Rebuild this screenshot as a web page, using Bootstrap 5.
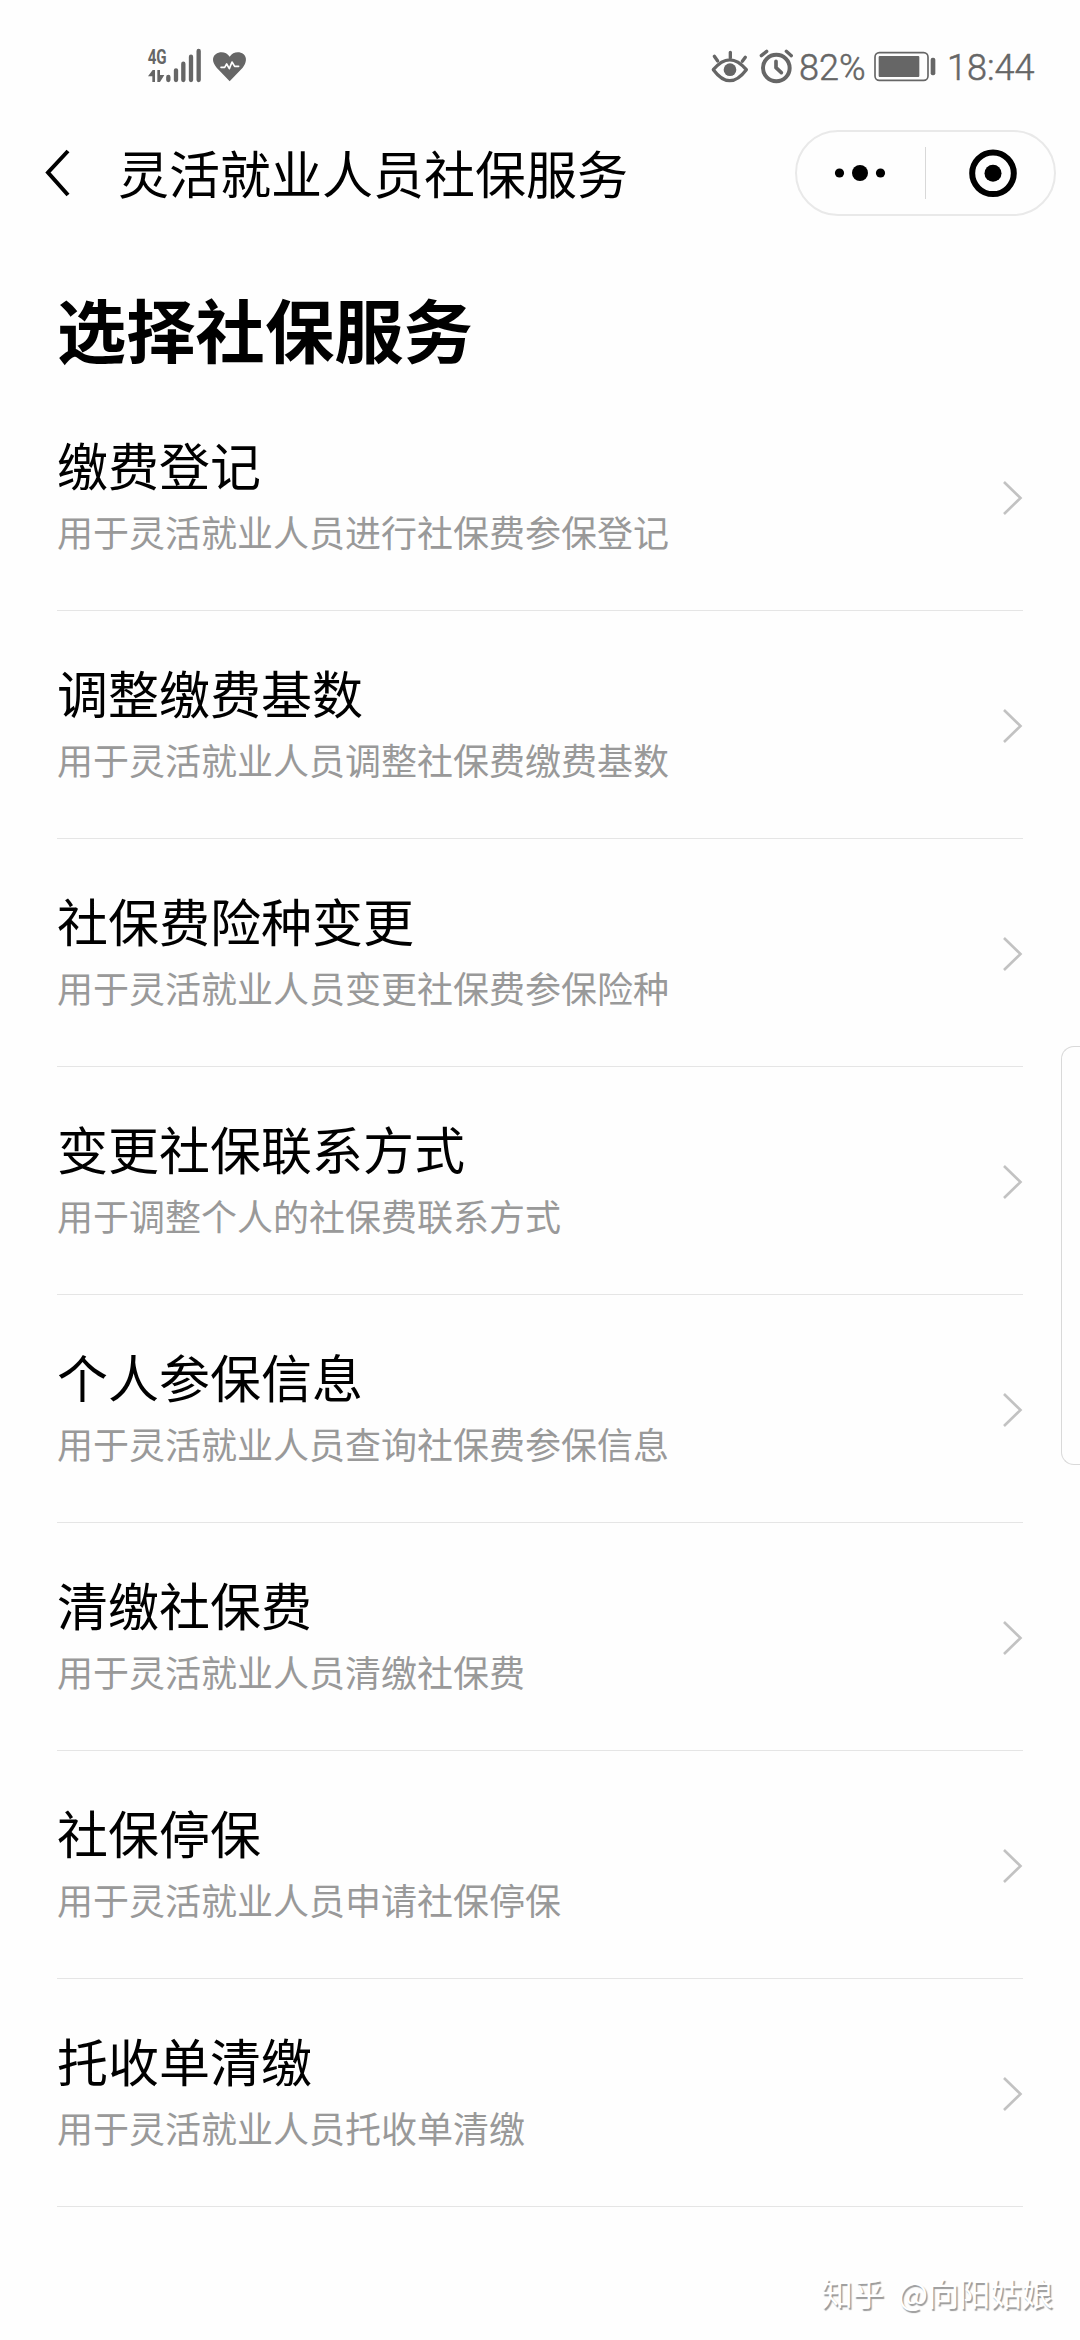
<!DOCTYPE html>
<html lang="zh-CN">
<head>
<meta charset="utf-8">
<meta name="viewport" content="width=device-width, initial-scale=1">
<title>灵活就业人员社保服务</title>
<link href="https://cdn.jsdelivr.net/npm/bootstrap@5.3.0/dist/css/bootstrap.min.css" rel="stylesheet">
<style>
  body { font-family: "Noto Sans CJK SC", sans-serif; background: #fefefe; color: #000; }
  .phone { width: 1080px; height: 2340px; }
  .status-bar { height: 130px; padding: 30px 44px 0 130px; color: #666; font-family: Roboto, sans-serif; font-size: 36px; font-weight: 300; line-height: 76px; }
  .status-bar svg { display: block; }
  .pct, .clock-text { -webkit-text-stroke: .5px #666; }
  .pct { width: 74px; margin-left: 6px; }
  .clock-text { margin-left: 11px; width: 89px; white-space: nowrap; }
  .title-bar { height: 86px; padding: 0 24px 0 42px; }
  .bar-title { font-size: 51px; line-height: 80px; margin: -3px 0 0 44px; }
  .capsule { width: 261px; height: 86px; border: 2px solid #e9e9e9; border-radius: 43px; }
  .services-page { margin: 0 57px; }
  .page-title { font-size: 69.300px; line-height: 100px; margin: 62px 0 5px; }
  .service { height: 228px; border-bottom: 1px solid #e5e5e5; padding-top: 3px; color: #000; }
  .service-text { margin-top: -12px; }
  .service-name { font-size: 51px; line-height: 76px; }
  .service-desc { font-size: 36px; line-height: 54px; color: #999; margin-top: 2px; }
  .side-tab { top: 1046px; width: 19px; height: 419px; border: 1px solid #d9d9d9; border-right: 0; border-radius: 13px 0 0 13px; background: #fefefe; }
  .watermark { right: 27px; bottom: 24px; font-size: 31.300px; line-height: 46px; color: #fff; word-spacing: 7px; text-shadow: 1.5px 1.5px 1px #999; }
</style>
</head>
<body>
<div class="phone position-relative overflow-hidden">
  <header>
    <div class="status-bar d-flex">
      <svg width="140" height="70" viewBox="0 0 420 210" fill="#666" stroke="#666" stroke-linecap="round">
        <text x="53" y="101" font-family="Roboto" font-size="59" font-weight="700" textLength="57" lengthAdjust="spacingAndGlyphs" stroke="none">4G</text>
        <path stroke="none" d="M54 139L68 120H75V156H67V139ZM82 120H90V135H103L90 156H82Z"/>
        <g stroke-width="13" fill="none"><path d="M115 141V150M138 121V150M160 101V150M183 80V150M206 63V150"/></g>
        <path stroke="none" d="M299 154L260 113C246 97 246 81 257 73C271 63 289 66 299 80C309 66 327 63 341 73C351 82 350 99 338 113Z"/>
        <path d="M273 112H284L290 102L298 116L306 96L314 109H326" fill="none" stroke="#fff" stroke-width="5" stroke-linejoin="round"/>
      </svg>
      <div class="d-flex ms-auto">
        <svg width="83" height="70" viewBox="30 0 249 210" fill="none" stroke="#666" stroke-width="10" stroke-linecap="round">
          <path d="M40 119Q89 60 139 119Q89 185 40 119Z" stroke-linejoin="round"/>
          <circle cx="90" cy="119" r="19" fill="#666" stroke="none"/>
          <path d="M91 67V83M43 79L53 93M136 82L127 94"/>
          <circle cx="229" cy="114" r="40" stroke-width="12"/>
          <path d="M228 94V113L244 128" stroke-width="11" stroke-linejoin="round"/>
          <path d="M184 77L200 64M259 64L274 77"/>
        </svg>
        <span class="pct">82%</span>
        <svg width="63" height="70" viewBox="520 0 189 210" fill="#666">
          <rect x="526" y="68" width="159" height="83" rx="13" fill="none" stroke="#666" stroke-width="5"/>
          <rect x="537" y="78" width="122" height="63" rx="3"/>
          <rect x="693" y="83" width="14" height="53" rx="6"/>
        </svg>
        <span class="clock-text">18:44</span>
      </div>
    </div>
    <nav class="title-bar d-flex align-items-center">
      <svg width="32" height="52" viewBox="0 0 32 52" fill="none" stroke="#000" stroke-width="4"><path d="M26 4L6 25.500L26 48"/></svg>
      <span class="bar-title">灵活就业人员社保服务</span>
      <div class="capsule ms-auto">
        <svg class="d-block" width="257" height="82" viewBox="797 132 257 82">
          <circle cx="839.500" cy="173" r="4.600"/><circle cx="860" cy="173" r="8"/><circle cx="880.500" cy="173" r="4.600"/>
          <path d="M925.500 147V199" stroke="#d8d8d8"/>
          <circle cx="993" cy="173.300" r="20.800" fill="none" stroke="#000" stroke-width="6"/><circle cx="993" cy="173.300" r="8.500"/>
        </svg>
      </div>
    </nav>
  </header>
  <main class="services-page">
    <h1 class="page-title fw-bold">选择社保服务</h1>
    <div>
      <a class="service d-flex align-items-center justify-content-between text-decoration-none" href="#"><div class="service-text"><div class="service-name">缴费登记</div><div class="service-desc">用于灵活就业人员进行社保费参保登记</div></div><svg width="22" height="36" viewBox="0 0 22 36" fill="none" stroke="#c2c2c2" stroke-width="2.600"><path d="M3 2L19.500 18L3 34"/></svg></a>
      <a class="service d-flex align-items-center justify-content-between text-decoration-none" href="#"><div class="service-text"><div class="service-name">调整缴费基数</div><div class="service-desc">用于灵活就业人员调整社保费缴费基数</div></div><svg width="22" height="36" viewBox="0 0 22 36" fill="none" stroke="#c2c2c2" stroke-width="2.600"><path d="M3 2L19.500 18L3 34"/></svg></a>
      <a class="service d-flex align-items-center justify-content-between text-decoration-none" href="#"><div class="service-text"><div class="service-name">社保费险种变更</div><div class="service-desc">用于灵活就业人员变更社保费参保险种</div></div><svg width="22" height="36" viewBox="0 0 22 36" fill="none" stroke="#c2c2c2" stroke-width="2.600"><path d="M3 2L19.500 18L3 34"/></svg></a>
      <a class="service d-flex align-items-center justify-content-between text-decoration-none" href="#"><div class="service-text"><div class="service-name">变更社保联系方式</div><div class="service-desc">用于调整个人的社保费联系方式</div></div><svg width="22" height="36" viewBox="0 0 22 36" fill="none" stroke="#c2c2c2" stroke-width="2.600"><path d="M3 2L19.500 18L3 34"/></svg></a>
      <a class="service d-flex align-items-center justify-content-between text-decoration-none" href="#"><div class="service-text"><div class="service-name">个人参保信息</div><div class="service-desc">用于灵活就业人员查询社保费参保信息</div></div><svg width="22" height="36" viewBox="0 0 22 36" fill="none" stroke="#c2c2c2" stroke-width="2.600"><path d="M3 2L19.500 18L3 34"/></svg></a>
      <a class="service d-flex align-items-center justify-content-between text-decoration-none" href="#"><div class="service-text"><div class="service-name">清缴社保费</div><div class="service-desc">用于灵活就业人员清缴社保费</div></div><svg width="22" height="36" viewBox="0 0 22 36" fill="none" stroke="#c2c2c2" stroke-width="2.600"><path d="M3 2L19.500 18L3 34"/></svg></a>
      <a class="service d-flex align-items-center justify-content-between text-decoration-none" href="#"><div class="service-text"><div class="service-name">社保停保</div><div class="service-desc">用于灵活就业人员申请社保停保</div></div><svg width="22" height="36" viewBox="0 0 22 36" fill="none" stroke="#c2c2c2" stroke-width="2.600"><path d="M3 2L19.500 18L3 34"/></svg></a>
      <a class="service d-flex align-items-center justify-content-between text-decoration-none" href="#"><div class="service-text"><div class="service-name">托收单清缴</div><div class="service-desc">用于灵活就业人员托收单清缴</div></div><svg width="22" height="36" viewBox="0 0 22 36" fill="none" stroke="#c2c2c2" stroke-width="2.600"><path d="M3 2L19.500 18L3 34"/></svg></a>
    </div>
  </main>
  <div class="side-tab position-absolute end-0"></div>
  <div class="watermark position-absolute">知乎 @向阳姑娘</div>
</div>
<script src="https://cdn.jsdelivr.net/npm/bootstrap@5.3.0/dist/js/bootstrap.bundle.min.js"></script>
</body>
</html>
